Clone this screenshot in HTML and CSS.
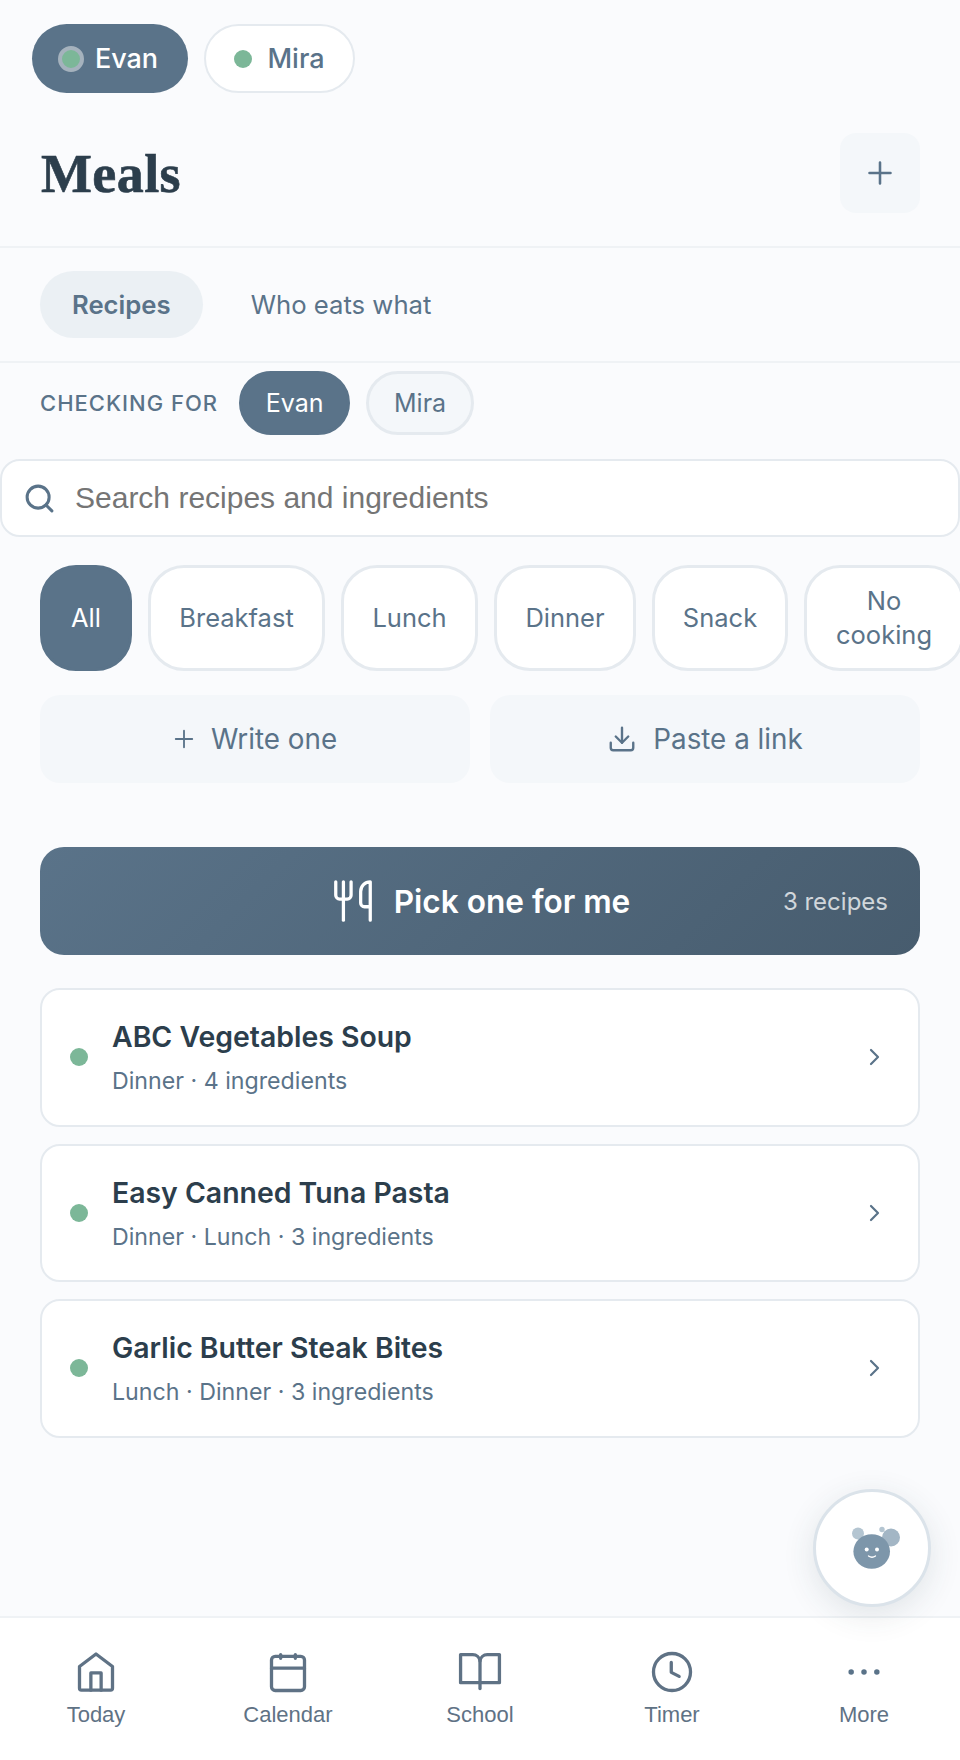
FILE: index.html
```html
<!DOCTYPE html>
<html lang="en">
<head>
    <meta charset="UTF-8">
    <meta name="viewport" content="width=device-width, initial-scale=1.0">
    <title>Meals</title>
    <link rel="stylesheet" href="styles.css">
</head>
<body>
    <div class="app">
        <div class="people">
            <div class="person active"><span class="dot ringed"></span>Evan</div>
            <div class="person"><span class="dot"></span>Mira</div>
        </div>
        <header class="top">
            <h1>Meals</h1>
            <div class="add-btn">
                <svg width="28" height="28" viewBox="0 0 24 24" fill="none" stroke="#5a7389" stroke-width="2.2" stroke-linecap="round"><path d="M12 3v18M3 12h18"/></svg>
            </div>
        </header>
        <div class="tabs">
            <div class="tab on">Recipes</div>
            <div class="tab">Who eats what</div>
        </div>
        <div class="checking">
            <span class="check-label">CHECKING FOR</span>
            <div class="mini on">Evan</div>
            <div class="mini">Mira</div>
        </div>
        <div class="search">
            <svg width="33" height="33" viewBox="0 0 24 24" fill="none" stroke="#5a7389" stroke-width="2.2" stroke-linecap="round"><circle cx="11" cy="11" r="8"/><path d="M21 21l-4.300-4.300"/></svg>
            <span>Search recipes and ingredients</span>
        </div>
        <div class="chips">
            <div class="chip on">All</div>
            <div class="chip">Breakfast</div>
            <div class="chip">Lunch</div>
            <div class="chip">Dinner</div>
            <div class="chip">Snack</div>
            <div class="chip">No cooking</div>
        </div>
        <div class="actions">
            <div class="action">
                <svg width="22" height="22" viewBox="0 0 24 24" fill="none" stroke="#5a7389" stroke-width="2" stroke-linecap="round"><path d="M12 3v18M3 12h18"/></svg>
                Write one
            </div>
            <div class="action">
                <svg width="30" height="30" viewBox="0 0 24 24" fill="none" stroke="#5a7389" stroke-width="1.900" stroke-linecap="round" stroke-linejoin="round"><path d="M21 15v4a2 2 0 0 1-2 2H5a2 2 0 0 1-2-2v-4"/><path d="M7 10l5 5 5-5"/><path d="M12 15V3"/></svg>
                Paste a link
            </div>
        </div>
        <div class="pick">
            <div class="pick-main">
                <svg width="46" height="46" viewBox="0 0 24 24" fill="none" stroke="#fff" stroke-width="1.700" stroke-linecap="round" stroke-linejoin="round"><path d="M3 2v7c0 1.100.9 2 2 2h4a2 2 0 0 0 2-2V2"/><path d="M7 2v20"/><path d="M21 15V2a5 5 0 0 0-5 5v6c0 1.100.9 2 2 2h3zm0 0v7"/></svg>
                Pick one for me
            </div>
            <span class="pick-count">3 recipes</span>
        </div>
        <div class="recipes">
            <div class="recipe">
                <span class="dot"></span>
                <div class="recipe-text">
                    <div class="recipe-name">ABC Vegetables Soup</div>
                    <div class="recipe-meta">Dinner · 4 ingredients</div>
                </div>
                <svg width="24" height="24" viewBox="0 0 24 24" fill="none" stroke="#5a7389" stroke-width="2.200" stroke-linecap="round" stroke-linejoin="round"><path d="M9 5l7 7-7 7"/></svg>
            </div>
            <div class="recipe">
                <span class="dot"></span>
                <div class="recipe-text">
                    <div class="recipe-name">Easy Canned Tuna Pasta</div>
                    <div class="recipe-meta">Dinner · Lunch · 3 ingredients</div>
                </div>
                <svg width="24" height="24" viewBox="0 0 24 24" fill="none" stroke="#5a7389" stroke-width="2.200" stroke-linecap="round" stroke-linejoin="round"><path d="M9 5l7 7-7 7"/></svg>
            </div>
            <div class="recipe">
                <span class="dot"></span>
                <div class="recipe-text">
                    <div class="recipe-name">Garlic Butter Steak Bites</div>
                    <div class="recipe-meta">Lunch · Dinner · 3 ingredients</div>
                </div>
                <svg width="24" height="24" viewBox="0 0 24 24" fill="none" stroke="#5a7389" stroke-width="2.200" stroke-linecap="round" stroke-linejoin="round"><path d="M9 5l7 7-7 7"/></svg>
            </div>
        </div>
        <nav class="nav">
            <div class="nav-item">
                <svg width="44" height="44" viewBox="0 0 24 24" fill="none" stroke="#5f7285" stroke-width="1.800" stroke-linecap="round" stroke-linejoin="round"><path d="M3 9l9-6.800L21 9v11.900a1 1 0 0 1-1 1H4a1 1 0 0 1-1-1z"/><path d="M9.200 21.900v-9.400h5.600v9.400"/></svg>
                <span>Today</span>
            </div>
            <div class="nav-item">
                <svg width="44" height="44" viewBox="0 0 24 24" fill="none" stroke="#5f7285" stroke-width="1.800" stroke-linecap="round" stroke-linejoin="round"><rect x="3" y="3.500" width="18" height="18.600" rx="2"/><path d="M8 2.500v2M16 2.500v2M3 9.900h18"/></svg>
                <span>Calendar</span>
            </div>
            <div class="nav-item">
                <svg width="44" height="44" viewBox="0 0 24 24" fill="none" stroke="#5f7285" stroke-width="1.800" stroke-linecap="round" stroke-linejoin="round"><path d="M1.400 2.500H8a4 4 0 0 1 4 3.500 4 4 0 0 1 4-3.500h6.600v15.300H1.400z"/><path d="M12 6v15"/></svg>
                <span>School</span>
            </div>
            <div class="nav-item">
                <svg width="44" height="44" viewBox="0 0 24 24" fill="none" stroke="#5f7285" stroke-width="1.800" stroke-linecap="round" stroke-linejoin="round"><circle cx="12" cy="12" r="10.100"/><path d="M11.600 6.800v5.400l4.300 2.200"/></svg>
                <span>Timer</span>
            </div>
            <div class="nav-item">
                <svg width="44" height="44" viewBox="0 0 24 24" fill="#5a7389"><circle cx="5" cy="12" r="1.500"/><circle cx="12" cy="12" r="1.500"/><circle cx="19" cy="12" r="1.500"/></svg>
                <span>More</span>
            </div>
        </nav>
        <div class="fab">
            <svg width="56" height="48" viewBox="0 0 56 48">
                <circle cx="14" cy="9.500" r="6" fill="#b4c5d1"/>
                <circle cx="47" cy="13.500" r="9" fill="#a3b6c5"/>
                <circle cx="38" cy="5.500" r="2.700" fill="#b4c5d1"/>
                <ellipse cx="27.700" cy="27.500" rx="18.300" ry="17.200" fill="#7d96aa"/>
                <circle cx="22.700" cy="25.500" r="2" fill="#fff"/>
                <circle cx="33" cy="25.500" r="2" fill="#fff"/>
                <path d="M24.500 32q3.500 2.500 7 0" fill="none" stroke="#fff" stroke-width="1.300" stroke-linecap="round"/>
            </svg>
        </div>
    </div>
</body>
</html>
```

FILE: styles.css
```css
body {
    margin: 0;
    padding: 0;
    background-color: #fafbfd;
    font-family: "Inter", "Liberation Sans", sans-serif;
    color: #2c3e4c;
}
.app {
    position: relative;
    width: 960px;
    height: 1760px;
    overflow: hidden;
}
.dot {
    display: block;
    flex: none;
    width: 18px;
    height: 18px;
    border-radius: 50%;
    background-color: #7cb798;
}
.people {
    display: flex;
    gap: 16px;
    padding: 24px 32px 0;
}
.person {
    display: flex;
    align-items: center;
    justify-content: center;
    gap: 15px;
    width: 151px;
    height: 69px;
    box-sizing: border-box;
    border: 2px solid #e5eaef;
    border-radius: 35px;
    background-color: #fff;
    font-size: 27px;
    font-weight: 500;
    color: #5a7389;
}
.person.active {
    width: 156px;
    gap: 11px;
    padding-right: 4px;
    border: 0;
    background-color: #5a7389;
    color: #fff;
}
.dot.ringed {
    box-sizing: content-box;
    border: 4px solid #a5b2bd;
}
.top {
    display: flex;
    align-items: center;
    justify-content: space-between;
    height: 155px;
    box-sizing: border-box;
    padding: 6px 40px 0 41px;
    border-bottom: 2px solid #eff2f5;
}
.top h1 {
    margin: 2px 0 0;
    font-family: "Liberation Serif", serif;
    font-size: 54px;
    font-weight: 700;
    letter-spacing: 0.4px;
    -webkit-text-stroke: 0.6px #2c3e4c;
    color: #2c3e4c;
}
.add-btn {
    display: flex;
    align-items: center;
    justify-content: center;
    width: 80px;
    height: 80px;
    border-radius: 16px;
    background-color: #f4f7fa;
}
.tabs {
    display: flex;
    align-items: center;
    gap: 16px;
    height: 115px;
    box-sizing: border-box;
    padding: 0 40px;
    border-bottom: 2px solid #eff2f5;
}
.tab {
    padding: 0 32px;
    height: 67px;
    line-height: 67px;
    border-radius: 34px;
    font-size: 25.700px;
    color: #5a7389;
}
.tab.on {
    background-color: #ebf0f4;
    font-weight: 600;
}
.checking {
    display: flex;
    align-items: center;
    gap: 16px;
    height: 64px;
    margin-top: 8px;
    padding: 0 40px;
}
.check-label {
    margin-right: 5px;
    font-size: 22px;
    font-weight: 500;
    letter-spacing: 1px;
    color: #5a7389;
}
.mini {
    width: 108px;
    height: 64px;
    line-height: 58px;
    box-sizing: border-box;
    border: 3px solid #e5eaef;
    border-radius: 32px;
    background-color: #f4f7fa;
    text-align: center;
    font-size: 25px;
    color: #5a7389;
}
.mini.on {
    width: 111px;
    border-color: #5a7389;
    background-color: #5a7389;
    color: #fff;
}
.search {
    display: flex;
    align-items: center;
    gap: 19px;
    height: 78px;
    box-sizing: border-box;
    margin-top: 24px;
    padding: 0 21px;
    border: 2px solid #e5eaef;
    border-radius: 20px;
    background-color: #fff;
    font-family: "Liberation Sans", sans-serif;
    font-size: 30px;
    color: #757575;
}
.chips {
    display: grid;
    grid-template-columns: 92px 177px 137px 142px 136px 160px;
    gap: 16px;
    margin-top: 28px;
    padding-left: 40px;
}
.chip {
    display: flex;
    align-items: center;
    justify-content: center;
    height: 106px;
    padding: 0 29px;
    box-sizing: border-box;
    border: 3px solid #e5eaef;
    border-radius: 36px;
    background-color: #fff;
    text-align: center;
    font-size: 25.500px;
    line-height: 34px;
    color: #5a7389;
}
.chip.on {
    border-color: #5a7389;
    background-color: #5a7389;
    color: #fff;
}
.actions {
    display: flex;
    gap: 20px;
    margin-top: 24px;
    padding: 0 40px;
}
.action {
    display: flex;
    flex: 1;
    align-items: center;
    justify-content: center;
    gap: 16px;
    height: 88px;
    border-radius: 20px;
    background-color: #f4f7fa;
    font-size: 27.800px;
    color: #5a7389;
}
.pick {
    position: relative;
    display: flex;
    align-items: center;
    justify-content: center;
    height: 108px;
    margin: 64px 40px 0;
    border-radius: 24px;
    background: linear-gradient(135deg, #5a7389, #475c6e);
    color: #fff;
}
.pick-main {
    display: flex;
    align-items: center;
    gap: 18px;
    font-size: 31.600px;
    font-weight: 600;
}
.pick-count {
    position: absolute;
    right: 32px;
    font-size: 24px;
    color: rgba(255, 255, 255, 0.75);
}
.recipes {
    display: flex;
    flex-direction: column;
    gap: 17px;
    margin: 33px 40px 0;
}
.recipe {
    display: flex;
    align-items: center;
    height: 138.500px;
    box-sizing: border-box;
    padding: 0 32px 0 28px;
    border: 2px solid #e5eaef;
    border-radius: 20px;
    background-color: #fff;
}
.recipe-text {
    flex: 1;
    margin-left: 24px;
}
.recipe-name {
    font-size: 28.400px;
    font-weight: 600;
    color: #2c3e4c;
}
.recipe-meta {
    margin-top: 13px;
    font-size: 23.200px;
    color: #5a7389;
}
.nav {
    position: absolute;
    left: 0;
    right: 0;
    bottom: 0;
    display: flex;
    height: 144px;
    box-sizing: border-box;
    padding-top: 32px;
    border-top: 2px solid #eff2f5;
    background-color: #fff;
}
.nav-item {
    display: flex;
    flex: 1;
    flex-direction: column;
    align-items: center;
    gap: 8px;
    font-family: "Liberation Sans", sans-serif;
    font-size: 22px;
    color: #5f7285;
}
.fab {
    position: absolute;
    left: 813px;
    top: 1489px;
    display: flex;
    align-items: center;
    justify-content: center;
    width: 118px;
    height: 118px;
    box-sizing: border-box;
    border: 3px solid #dbe3ea;
    border-radius: 50%;
    background-color: #fff;
    box-shadow: 0 8px 32px rgba(44, 62, 76, 0.12);
}
```
